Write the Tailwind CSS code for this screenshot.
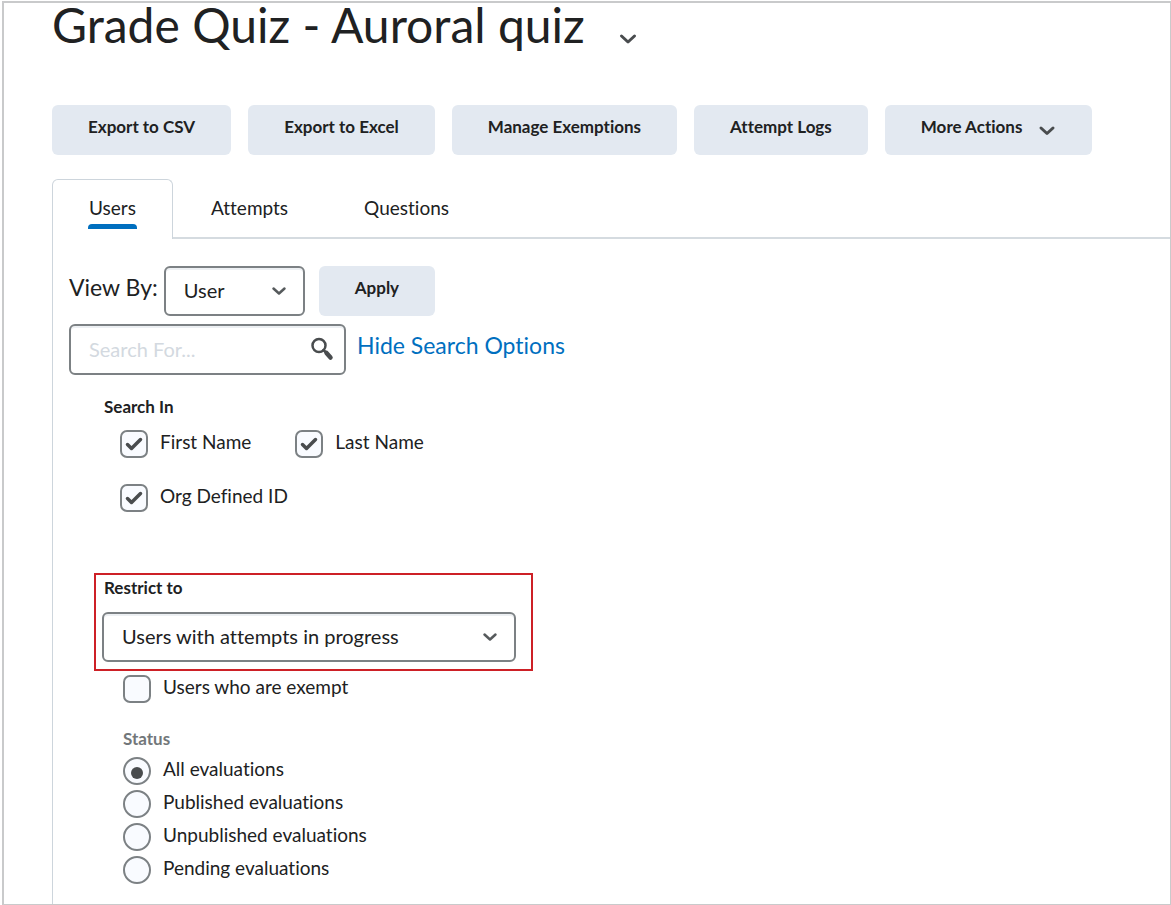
<!DOCTYPE html>
<html lang="en">
  <head>
    <meta charset="UTF-8" />
    <meta name="viewport" content="width=device-width, initial-scale=1.0" />
    <title>Grade Quiz - Auroral quiz</title>
    <script src="https://cdn.jsdelivr.net/npm/@tailwindcss/browser@4"></script>
  </head>
  <body class="bg-white font-['Lato',sans-serif] text-[19px] leading-6 text-[#202122] [font-variant-ligatures:none]">
    <div class="flex min-h-screen flex-col pl-[2px] pt-px">
      <main class="flex grow flex-col border-b border-l-2 border-r border-t-2 border-[#c9cacb] pl-12">
        <header class="flex items-start gap-[34px]">
          <h1 class="text-[48px] leading-[44px]">Grade Quiz - Auroral quiz</h1>
          <button type="button" aria-label="Quiz actions" class="pt-[30px]">
            <svg class="h-3 w-[18px]" viewBox="0 0 18 12" fill="none" stroke="#494c4e" stroke-width="3" stroke-linecap="round" stroke-linejoin="round">
              <path d="M2.500 3 9 9 15.500 3" />
            </svg>
          </button>
        </header>

        <!-- Toolbar -->
        <div class="mt-[58px] flex flex-wrap gap-[17px] text-[17px] font-bold">
          <button type="button" class="h-[50px] rounded-md bg-[#e3e9f1] px-9 pb-1.5">Export to CSV</button>
          <button type="button" class="h-[50px] rounded-md bg-[#e3e9f1] px-9 pb-1.5">Export to Excel</button>
          <button type="button" class="h-[50px] rounded-md bg-[#e3e9f1] px-9 pb-1.5">Manage Exemptions</button>
          <button type="button" class="h-[50px] rounded-md bg-[#e3e9f1] px-9 pb-1.5">Attempt Logs</button>
          <button type="button" class="flex h-[50px] items-center gap-4 rounded-md bg-[#e3e9f1] px-9">
            <span class="pb-1.5">More Actions</span>
            <svg class="h-3 w-[18px]" viewBox="0 0 18 12" fill="none" stroke="#494c4e" stroke-width="3" stroke-linecap="round" stroke-linejoin="round">
              <path d="M3 4 9 9.500 15 4" />
            </svg>
          </button>
        </div>

        <!-- Tabs -->
        <nav class="mt-6 flex">
          <a href="#users" class="flex h-[60px] flex-col items-center rounded-t-md border border-b-0 border-[#cdd5dc] px-[35px] pt-4">
            <span>Users</span>
            <span class="mt-1 h-[5px] w-[49px] rounded-t-sm bg-[#006fbf]"></span>
          </a>
          <div class="flex grow gap-[76px] border-b-2 border-[#d5dbe0] pl-[38px] pt-[17px]">
            <a href="#attempts">Attempts</a>
            <a href="#questions">Questions</a>
          </div>
        </nav>

        <section id="users" class="grow border-l border-[#cdd5dc] pb-5 pl-4 pt-[27px]">
          <div class="flex items-start">
            <label for="view-by" class="pr-1.5 pt-[9px] text-[23px]">View By:</label>
            <div class="grid w-[141px] items-center">
              <select id="view-by" class="col-start-1 row-start-1 h-[50px] appearance-none rounded-md border-2 border-[#7c8184] bg-white pb-0.5 pl-[18px] text-xl shadow-[inset_0_2px_0_#edf0f3]">
                <option>User</option>
                <option>Question</option>
              </select>
              <svg class="pointer-events-none col-start-1 row-start-1 mr-[18px] h-2.5 w-4 justify-self-end" viewBox="0 0 16 10" fill="none" stroke="#565a5c" stroke-width="2.500" stroke-linecap="round" stroke-linejoin="round">
                <path d="M2.500 2.500 8 7.500 13.500 2.500" />
              </svg>
            </div>
            <button type="button" class="ml-3.5 h-[50px] rounded-md bg-[#e3e9f1] px-9 pb-1.5 text-[17px] font-bold">Apply</button>
          </div>

          <div class="mt-2 flex items-start gap-[11px]">
            <div class="grid w-[277px] items-center">
              <input type="search" aria-label="Search For" placeholder="Search For..." class="col-start-1 row-start-1 h-[51px] appearance-none rounded-md border-2 border-[#7c8184] pb-0.5 pl-[18px] text-xl shadow-[inset_0_2px_0_#edf0f3] placeholder:text-[#d3d9e0]" />
              <button type="button" aria-label="Search" class="col-start-1 row-start-1 mr-3 justify-self-end pb-0.5">
                <svg class="size-6" viewBox="0 0 24 24" fill="none" stroke="#494c4e" stroke-linecap="round">
                  <circle cx="9" cy="8.500" r="6.500" stroke-width="2.500" />
                  <path d="m13.500 13 3 3" stroke-width="2.500" />
                  <path d="m16.500 16 4 4.500" stroke-width="4.500" />
                </svg>
              </button>
            </div>
            <a href="#search-options" class="pt-[9px] text-[23px] text-[#006fbf]">Hide Search Options</a>
          </div>

          <div id="search-options" class="pl-[34px]">
            <fieldset class="mt-5">
              <legend class="pl-px text-[17px] font-bold">Search In</legend>
              <div class="mt-[11px] flex flex-col gap-[26px] pl-[17px]">
                <div class="flex gap-11">
                  <label class="flex items-center gap-3">
                    <span class="grid size-7 place-items-center">
                      <input type="checkbox" checked class="peer col-start-1 row-start-1 size-7 appearance-none rounded-[7px] border-2 border-[#7c8184] bg-[#f9fbff]" />
                      <svg class="pointer-events-none invisible col-start-1 row-start-1 size-5 peer-checked:visible" viewBox="0 0 20 20" fill="none" stroke="#494c4e" stroke-width="3.500" stroke-linecap="round" stroke-linejoin="round">
                        <path d="m3.500 10.500 4 4 9-9" />
                      </svg>
                    </span>
                    <span class="pb-1">First Name</span>
                  </label>
                  <label class="flex items-center gap-3">
                    <span class="grid size-7 place-items-center">
                      <input type="checkbox" checked class="peer col-start-1 row-start-1 size-7 appearance-none rounded-[7px] border-2 border-[#7c8184] bg-[#f9fbff]" />
                      <svg class="pointer-events-none invisible col-start-1 row-start-1 size-5 peer-checked:visible" viewBox="0 0 20 20" fill="none" stroke="#494c4e" stroke-width="3.500" stroke-linecap="round" stroke-linejoin="round">
                        <path d="m3.500 10.500 4 4 9-9" />
                      </svg>
                    </span>
                    <span class="pb-1">Last Name</span>
                  </label>
                </div>
                <label class="flex items-center gap-3 self-start">
                  <span class="grid size-7 place-items-center">
                    <input type="checkbox" checked class="peer col-start-1 row-start-1 size-7 appearance-none rounded-[7px] border-2 border-[#7c8184] bg-[#f9fbff]" />
                    <svg class="pointer-events-none invisible col-start-1 row-start-1 size-5 peer-checked:visible" viewBox="0 0 20 20" fill="none" stroke="#494c4e" stroke-width="3.500" stroke-linecap="round" stroke-linejoin="round">
                      <path d="m3.500 10.500 4 4 9-9" />
                    </svg>
                  </span>
                  <span class="pb-1">Org Defined ID</span>
                </label>
              </div>
            </fieldset>

            <!-- Highlighted restriction filter -->
            <div class="-ml-[9px] mt-[61px] w-[439px] border-2 border-[#cd2026] pb-[7px] pl-1.5 pt-px">
              <label for="restrict" class="block pl-0.5 text-[17px] font-bold">Restrict to</label>
              <div class="mt-3 grid w-[414px] items-center">
                <select id="restrict" class="col-start-1 row-start-1 h-[50px] appearance-none rounded-md border-2 border-[#7c8184] bg-white pb-0.5 pl-[18px] text-xl shadow-[inset_0_2px_0_#edf0f3]">
                  <option>Users with attempts in progress</option>
                  <option>All users</option>
                </select>
                <svg class="pointer-events-none col-start-1 row-start-1 mr-[18px] h-2.5 w-4 justify-self-end" viewBox="0 0 16 10" fill="none" stroke="#565a5c" stroke-width="2.500" stroke-linecap="round" stroke-linejoin="round">
                  <path d="M2.500 2.500 8 7.500 13.500 2.500" />
                </svg>
              </div>
            </div>

            <div class="mt-1 flex flex-col items-start pl-5">
              <label class="flex items-center gap-3">
                <input type="checkbox" class="size-7 appearance-none rounded-[7px] border-2 border-[#7c8184] bg-[#f9fbff]" />
                <span class="pb-1">Users who are exempt</span>
              </label>

              <fieldset class="mt-6">
                <legend class="text-[17px] font-bold text-[#72777a]">Status</legend>
                <div class="mt-1.5 flex flex-col gap-[5px]">
                  <label class="flex items-center gap-3">
                    <span class="grid size-7 place-items-center">
                      <input type="radio" name="status" checked class="peer col-start-1 row-start-1 size-7 appearance-none rounded-full border-2 border-[#7c8184] bg-[#f9fbff]" />
                      <span class="pointer-events-none invisible col-start-1 row-start-1 mt-1 size-3 rounded-full bg-[#494c4e] peer-checked:visible"></span>
                    </span>
                    <span class="pb-1">All evaluations</span>
                  </label>
                  <label class="flex items-center gap-3">
                    <input type="radio" name="status" class="size-7 appearance-none rounded-full border-2 border-[#7c8184] bg-[#f9fbff]" />
                    <span class="pb-1">Published evaluations</span>
                  </label>
                  <label class="flex items-center gap-3">
                    <input type="radio" name="status" class="size-7 appearance-none rounded-full border-2 border-[#7c8184] bg-[#f9fbff]" />
                    <span class="pb-1">Unpublished evaluations</span>
                  </label>
                  <label class="flex items-center gap-3">
                    <input type="radio" name="status" class="size-7 appearance-none rounded-full border-2 border-[#7c8184] bg-[#f9fbff]" />
                    <span class="pb-1">Pending evaluations</span>
                  </label>
                </div>
              </fieldset>
            </div>
          </div>
        </section>
      </main>
    </div>
  </body>
</html>
